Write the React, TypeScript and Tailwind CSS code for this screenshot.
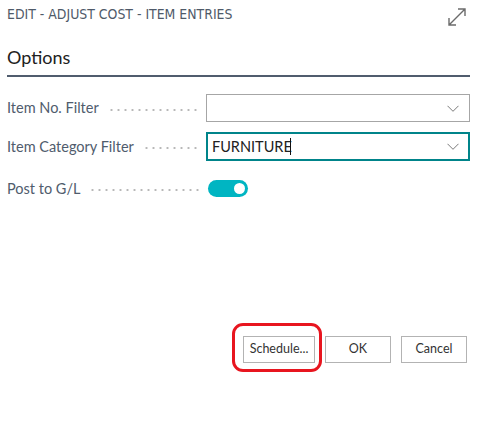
import React from 'react';

const Dots = () => (
  <span className="flex-1 h-[4px] mt-[3px] ml-[9px] mr-[6px] bg-[radial-gradient(circle,#b8b8b8_0.9px,transparent_1.3px)] bg-[length:7px_4px] bg-repeat-x" />
);

const Chevron = () => (
  <svg width="12" height="7" viewBox="0 0 12 7" className="text-[#7a7a7a]">
    <path d="M0.5 0.8l5.5 5.5 5.5-5.5" fill="none" stroke="currentColor" strokeWidth="1" />
  </svg>
);

const FieldRow = ({ label, children }: { label: string; children: React.ReactNode }) => (
  <div className="flex items-center">
    <div className="w-[199px] flex items-center text-[14.5px] text-[#505c6d]">
      <span className="whitespace-nowrap">{label}</span>
      <Dots />
    </div>
    {children}
  </div>
);

export default function App() {
  return (
    <div className="relative w-[503px] h-[443px] bg-white font-['Lato','Noto_Sans',sans-serif]">
      <div className="flex items-start justify-between pl-[7px] pr-[35px] pt-[4px]">
        <h1 className="font-['DejaVu_Sans_Condensed','DejaVu_Sans',sans-serif] text-[13.9px] text-[#4f5a69]">
          EDIT - ADJUST COST - ITEM ENTRIES
        </h1>
        <svg width="22" height="22" viewBox="0 0 22 22" className="mt-[2px] text-[#6b6b6b]">
          <path d="M3 19L19 3M12 3h7v7M3 12v7h7" fill="none" stroke="currentColor" strokeWidth="1.4" />
        </svg>
      </div>

      <div className="mx-[7px] w-[463px] mt-[17px] border-b-2 border-[#505c6d] pb-[6px]">
        <h2 className="text-[18px] text-[#212121] leading-[24px]">Options</h2>
      </div>

      <div className="pl-[7px] mt-[17px] flex flex-col gap-[10px]">
        <FieldRow label="Item No. Filter">
          <div className="w-[264px] h-[28px] border border-[#a6a6a6] flex items-center justify-end pr-[10px]">
            <Chevron />
          </div>
        </FieldRow>
        <FieldRow label="Item Category Filter">
          <div className="w-[264px] h-[29px] border-2 border-[#00848a] flex items-center justify-between pl-[4px] pr-[9px]">
            <span className="text-[14.5px] text-[#212121] flex items-center">
              FURNITURE<span className="inline-block w-px h-[17px] bg-[#111] -ml-[2px]" />
            </span>
            <Chevron />
          </div>
        </FieldRow>
        <div className="mt-[7px]">
          <FieldRow label="Post to G/L">
            <div className="ml-[2px] w-[40px] h-[17px] rounded-full bg-[#00b5c2] flex items-center justify-end pr-[3px]">
              <div className="w-[11px] h-[11px] rounded-full bg-white" />
            </div>
          </FieldRow>
        </div>
      </div>

      <div className="flex justify-end gap-[10px] pr-[36px] mt-[136px] text-[12.5px] text-[#333]">
        <button className="w-[72px] h-[27px] border border-[#b3b3b3] bg-white">Schedule...</button>
        <button className="w-[66px] h-[27px] border border-[#b3b3b3] bg-white">OK</button>
        <button className="w-[66px] h-[27px] border border-[#b3b3b3] bg-white">Cancel</button>
      </div>

      <div className="absolute left-[232px] top-[323px] w-[90px] h-[49px] border-[3px] border-[#e8151f] rounded-[11px] pointer-events-none" />
    </div>
  );
}
